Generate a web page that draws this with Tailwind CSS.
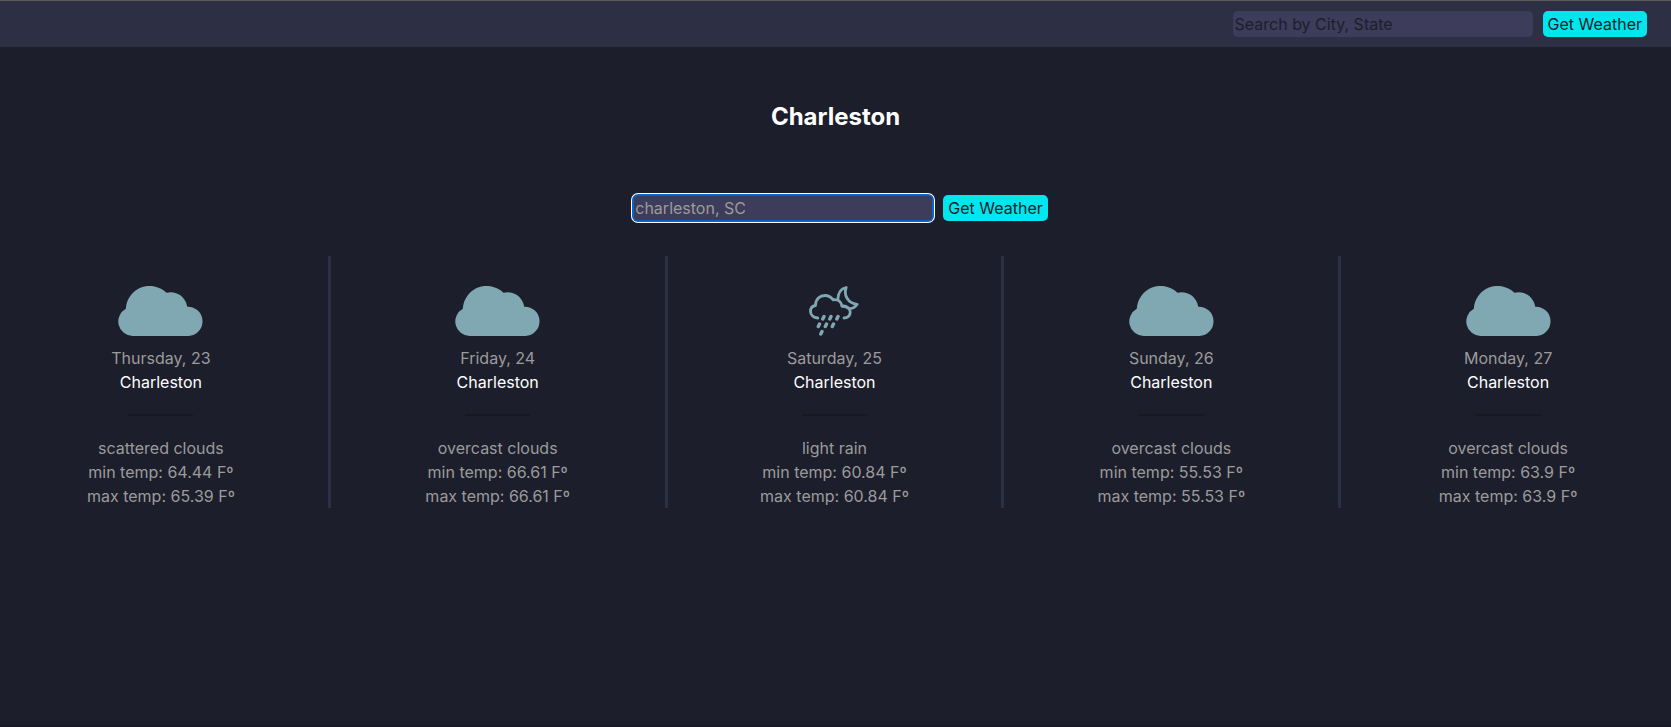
<!DOCTYPE html>
<html lang="en">
<head>
<meta charset="utf-8">
<title>Weather</title>
<script src="https://cdn.jsdelivr.net/npm/@tailwindcss/browser@4"></script>
</head>
<body class="flex min-h-screen flex-col overflow-x-hidden border-b-2 border-[#191824] bg-[#1d1e2b] font-['Inter',sans-serif] text-base text-[#9b9b9b]">
<svg class="hidden" aria-hidden="true">
  <symbol id="cloud" viewBox="0 0 85 50">
    <path d="M14.5 50A14.5 14.5 0 0 1 7.8 22.8A24 24 0 0 1 48.5 6.7A17 17 0 0 1 69.3 20.7A14.6 14.6 0 0 1 70.4 50Z"/>
  </symbol>
</svg>
<header class="border-t border-[#5c5c60] bg-[#2d2f45] px-6 py-[10px]">
  <form class="flex justify-end gap-[10px]">
    <input type="text" aria-label="City and state" placeholder="Search by City, State" class="h-[26px] w-[300px] rounded-[5px] bg-[#3d3c5a] px-[2px] placeholder:text-[#1d1e2b] outline-none">
    <button type="button" class="h-[26px] rounded-[5px] bg-[#00e6ee] px-[5px] leading-6 text-[#1d1e2b]">Get Weather</button>
  </form>
</header>
<main>
  <h1 class="mt-[54px] text-center text-2xl font-bold text-white">Charleston</h1>
  <form class="mt-[62px] flex justify-center gap-[10px] pl-[10px]">
    <input type="text" aria-label="City and state" value="charleston, SC" class="h-[26px] w-[300px] rounded-[5px] bg-[#3d3c5a] px-[2px] outline-none shadow-[inset_0_0_0_1px_#0b63ce,0_0_0_1px_#0b63ce,0_0_0_2px_#ffffff]">
    <button type="button" class="h-[26px] rounded-[5px] bg-[#00e6ee] px-[5px] leading-6 text-[#1d1e2b]">Get Weather</button>
  </form>
  <div class="mt-[35px] -mr-[7px] -ml-[6px] grid grid-cols-5 text-center">
    <section class="border-r-3 border-[#2d2f45] pt-[30px]">
      <svg class="mx-auto mb-[10px] h-[50px] w-[85px] fill-[#7fa8b3]"><use href="#cloud"/></svg>
      <p>Thursday, 23</p>
      <h2 class="text-white">Charleston</h2>
      <hr class="mx-auto my-5 w-[65px] border-t-2 border-[#181820]">
      <p>scattered clouds</p>
      <p>min temp: 64.44 Fº</p>
      <p>max temp: 65.39 Fº</p>
    </section>
    <section class="border-r-3 border-[#2d2f45] pt-[30px]">
      <svg class="mx-auto mb-[10px] h-[50px] w-[85px] fill-[#7fa8b3]"><use href="#cloud"/></svg>
      <p>Friday, 24</p>
      <h2 class="text-white">Charleston</h2>
      <hr class="mx-auto my-5 w-[65px] border-t-2 border-[#181820]">
      <p>overcast clouds</p>
      <p>min temp: 66.61 Fº</p>
      <p>max temp: 66.61 Fº</p>
    </section>
    <section class="border-r-3 border-[#2d2f45] pt-[30px]">
      <svg class="mx-auto mb-[10px] h-[50px] w-[50px] fill-none stroke-[#7fa8b3]" viewBox="0 0 50 50" stroke-width="2.8" stroke-linecap="round" stroke-linejoin="round">
        <path d="M8.8 32C4.500 31.500 1.500 29 1.500 25.500C1.500 22.500 3.500 20 6.500 19.500C6.500 13 11 9.500 16 9.500C19.500 9.500 22 11 24 13.800C28.500 12.800 32.500 15.500 33 20C38 19.700 41.200 22.500 41.200 26C41.200 29.500 39 31.800 35 32"/>
        <path d="M28.800 13.500C29 7 32 2.500 37.200 1.500C34.500 9 38.500 17 48.200 18.300C46 21.500 43 22.800 40 22.500M33 20C35 20 37.500 20.700 39 22"/>
        <path stroke-width="3.400" d="M15 30.500L13.800 33M22 30.500L20.800 33M29 30.500L27.800 33M10.500 38L9.300 40.500M17.500 38L16.300 40.500M24.500 38L23.300 40.500M13 45.500L11.800 48"/>
      </svg>
      <p>Saturday, 25</p>
      <h2 class="text-white">Charleston</h2>
      <hr class="mx-auto my-5 w-[65px] border-t-2 border-[#181820]">
      <p>light rain</p>
      <p>min temp: 60.84 Fº</p>
      <p>max temp: 60.84 Fº</p>
    </section>
    <section class="border-r-3 border-[#2d2f45] pt-[30px]">
      <svg class="mx-auto mb-[10px] h-[50px] w-[85px] fill-[#7fa8b3]"><use href="#cloud"/></svg>
      <p>Sunday, 26</p>
      <h2 class="text-white">Charleston</h2>
      <hr class="mx-auto my-5 w-[65px] border-t-2 border-[#181820]">
      <p>overcast clouds</p>
      <p>min temp: 55.53 Fº</p>
      <p>max temp: 55.53 Fº</p>
    </section>
    <section class="border-r-3 border-[#2d2f45] pt-[30px]">
      <svg class="mx-auto mb-[10px] h-[50px] w-[85px] fill-[#7fa8b3]"><use href="#cloud"/></svg>
      <p>Monday, 27</p>
      <h2 class="text-white">Charleston</h2>
      <hr class="mx-auto my-5 w-[65px] border-t-2 border-[#181820]">
      <p>overcast clouds</p>
      <p>min temp: 63.9 Fº</p>
      <p>max temp: 63.9 Fº</p>
    </section>
  </div>
</main>
</body>
</html>
